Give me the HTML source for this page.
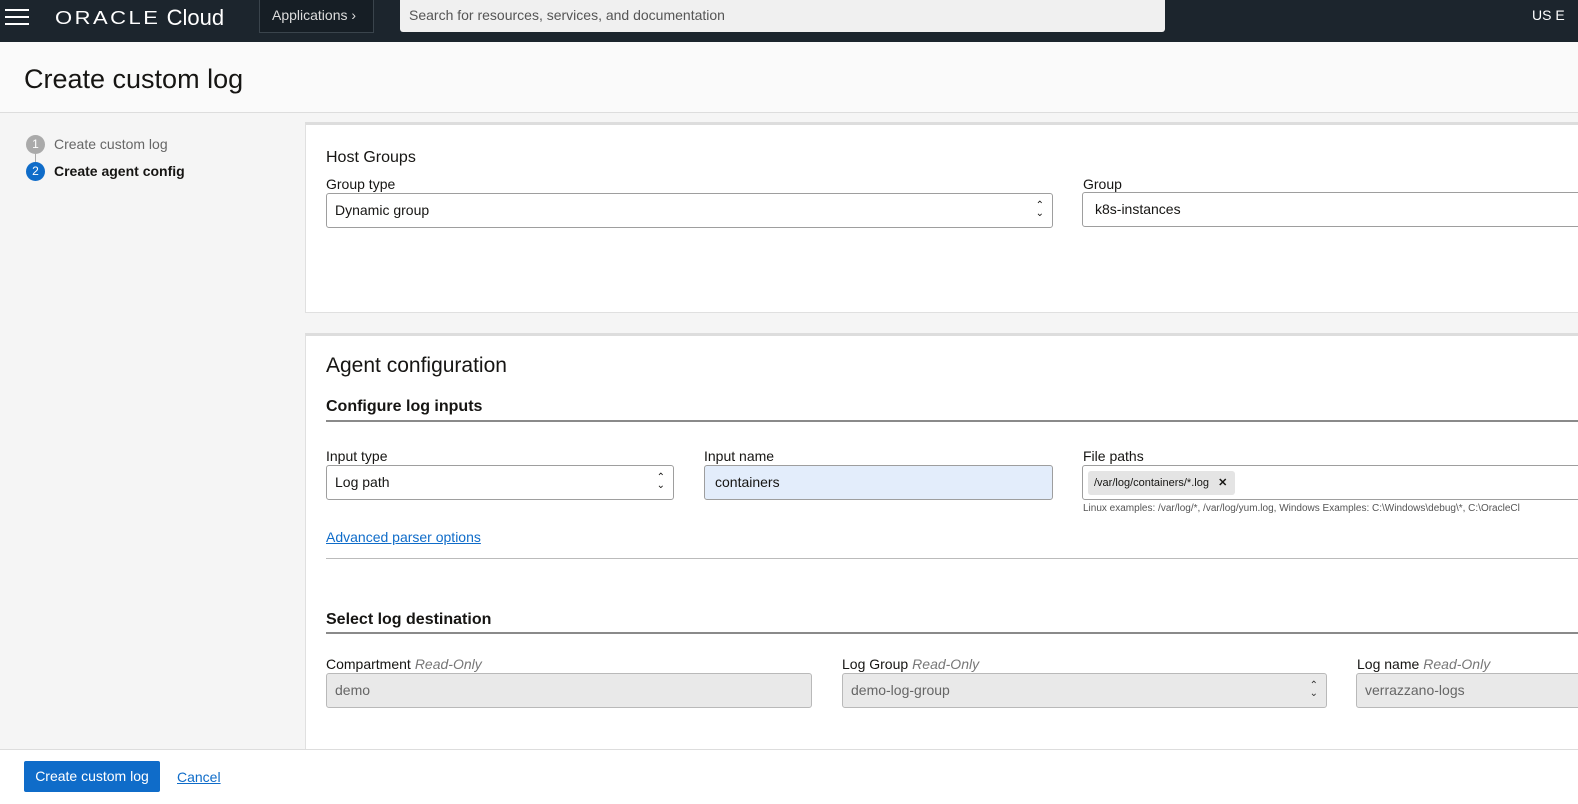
<!DOCTYPE html>
<html><head><meta charset="utf-8"><style>
*{box-sizing:border-box;margin:0;padding:0}
body{width:1578px;height:804px;overflow:hidden;font-family:"Liberation Sans",Arial,sans-serif;color:#161513;background:#f5f5f5;position:relative}
.top{position:absolute;left:0;top:0;width:1578px;height:42px;background:#1c252d}
.abs{position:absolute}
.lbl{position:absolute;font-size:14px;color:#161513}
.inp{position:absolute;border:1px solid #9e9e9e;border-radius:3px;background:#fff;height:35px;font-size:14px;padding:0 0 0 8px;line-height:33px}
.ro{background:#e9e9e9;border-color:#b9b9b9;color:#666}
.card{position:absolute;left:305px;width:1273px;background:#fff;border-top:3px solid #ddd;border-left:1px solid #e0e0e0;border-bottom:1px solid #e0e0e0}
.h3{position:absolute;font-size:16px;font-weight:bold}
.rule{position:absolute;height:2px;background:#8a8a8a}
.arr{position:absolute;right:8px;top:8px;font-size:10px;line-height:8px;text-align:center}
i{font-style:italic;color:#777;margin-left:4px}
</style></head><body>
<div class="top">
 <div class="abs" style="left:5px;top:9px;width:24px">
  <div style="height:2px;background:#fff;margin-bottom:5px"></div><div style="height:2px;background:#fff;margin-bottom:5px"></div><div style="height:2px;background:#fff"></div></div>
 <div class="abs" style="left:55px;top:5px;color:#fff;font-size:22px;white-space:nowrap"><span style="letter-spacing:2.5px;transform:scaleY(0.85);display:inline-block">ORACLE</span> <span>Cloud</span></div>
 <div class="abs" style="left:259px;top:0;width:115px;height:33px;border:1px solid #3a444c;border-top:none;color:#ddd;font-size:14px;line-height:31px;padding-left:12px;background:#161e25">Applications &#x203A;</div>
 <div class="abs" style="left:400px;top:0;width:765px;height:32px;background:#f0f0f0;border-radius:0 0 3px 3px;font-size:14px;color:#555;line-height:31px;padding-left:9px">Search for resources, services, and documentation</div>
 <div class="abs" style="left:1532px;top:7px;color:#fff;font-size:14px">US E</div>
</div>
<div class="abs" style="left:0;top:42px;width:1578px;height:71px;background:#fafafa;border-bottom:1px solid #ddd">
 <div class="abs" style="left:24px;top:22px;font-size:27px;color:#161513">Create custom log</div>
</div>
<div class="abs" style="left:26px;top:135px;width:19px;height:19px;border-radius:50%;background:#aaa;color:#fff;font-size:12px;text-align:center;line-height:19px">1</div>
<div class="abs" style="left:35px;top:154px;width:1px;height:8px;background:#aaa"></div>
<div class="abs" style="left:26px;top:162px;width:19px;height:19px;border-radius:50%;background:#0f6cc9;color:#fff;font-size:12px;text-align:center;line-height:19px">2</div>
<div class="lbl" style="left:54px;top:136px;color:#666">Create custom log</div>
<div class="lbl" style="left:54px;top:163px;font-weight:bold">Create agent config</div>

<div class="card" style="top:122px;height:191px"></div>
<div class="lbl" style="left:326px;top:149px;font-size:16px">Host Groups</div>
<div class="lbl" style="left:326px;top:176px">Group type</div>
<div class="inp" style="left:326px;top:193px;width:727px">Dynamic group<div class="arr">&#x2303;<br>&#x2304;</div></div>
<div class="lbl" style="left:1083px;top:176px">Group</div>
<div class="inp" style="left:1082px;top:192px;width:500px;padding-left:12px">k8s-instances</div>

<div class="card" style="top:333px;height:417px"></div>
<div class="lbl" style="left:326px;top:354px;font-size:21px">Agent configuration</div>
<div class="h3" style="left:326px;top:398px">Configure log inputs</div>
<div class="rule" style="left:326px;top:420px;width:1252px"></div>
<div class="lbl" style="left:326px;top:448px">Input type</div>
<div class="inp" style="left:326px;top:465px;width:348px">Log path<div class="arr">&#x2303;<br>&#x2304;</div></div>
<div class="lbl" style="left:704px;top:448px">Input name</div>
<div class="inp" style="left:704px;top:465px;width:349px;background:#e3edfb;padding-left:10px">containers</div>
<div class="lbl" style="left:1083px;top:448px">File paths</div>
<div class="inp" style="left:1082px;top:465px;width:500px;padding-left:5px"><span style="display:inline-block;margin-top:5px;background:#e4e4e4;border-radius:3px;height:24px;line-height:24px;padding:0 8px 0 6px;font-size:11px;vertical-align:top">/var/log/containers/*.log &nbsp;&nbsp;<b>&#x2715;</b></span></div>
<div class="lbl" style="left:1083px;top:503px;font-size:10px;color:#555;white-space:nowrap">Linux examples: /var/log/*, /var/log/yum.log, Windows Examples: C:\Windows\debug\*, C:\OracleCl</div>
<div class="lbl" style="left:326px;top:529px;color:#0f6cc9;text-decoration:underline">Advanced parser options</div>
<div class="abs" style="left:326px;top:558px;width:1252px;height:1px;background:#bbb"></div>
<div class="h3" style="left:326px;top:611px">Select log destination</div>
<div class="rule" style="left:326px;top:632px;width:1252px"></div>
<div class="lbl" style="left:326px;top:656px">Compartment<i>Read-Only</i></div>
<div class="inp ro" style="left:326px;top:673px;width:486px">demo</div>
<div class="lbl" style="left:842px;top:656px">Log Group<i>Read-Only</i></div>
<div class="inp ro" style="left:842px;top:673px;width:485px">demo-log-group<div class="arr" style="color:#333">&#x2303;<br>&#x2304;</div></div>
<div class="lbl" style="left:1357px;top:656px">Log name<i>Read-Only</i></div>
<div class="inp ro" style="left:1356px;top:673px;width:230px">verrazzano-logs</div>

<div class="abs" style="left:0;top:749px;width:1578px;height:55px;background:#fff;border-top:1px solid #ddd">
 <div class="abs" style="left:24px;top:11px;width:136px;height:31px;background:#0f6cc9;border-radius:2px;color:#fff;font-size:14px;text-align:center;line-height:31px">Create custom log</div>
 <div class="abs" style="left:177px;top:19px;font-size:14px;color:#0f6cc9;text-decoration:underline">Cancel</div>
</div>
</body></html>
